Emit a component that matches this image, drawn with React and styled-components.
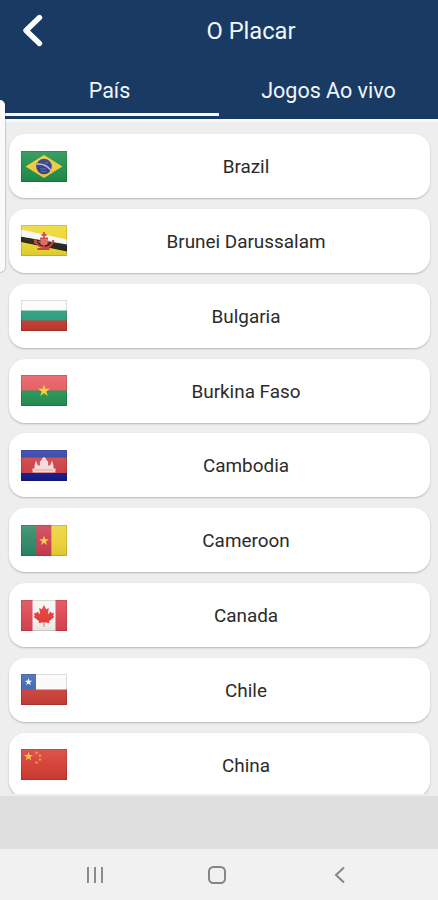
import React from 'react'
import styled, { createGlobalStyle } from 'styled-components'

const GlobalStyle = createGlobalStyle`
  body {
    margin: 0;
    background: #eeeeee;
    font-family: Roboto, "Liberation Sans", sans-serif;
  }

  * {
    box-sizing: border-box;
  }
`

const Screen = styled.div`
  position: relative;
  width: 438px;
  height: 900px;
  overflow: hidden;
  display: flex;
  flex-direction: column;
  background: #eeeeee;
`

const Header = styled.header`
  flex: none;
  height: 119px;
  background: #193b63;
  color: #f1f6fd;
`

const TitleBar = styled.div`
  display: flex;
  align-items: center;
  height: 62px;
`

const BackButton = styled.button`
  display: flex;
  width: 64px;
  padding: 0 0 0 22px;
  border: 0;
  background: none;
`

const Title = styled.h1`
  flex: 1;
  margin: 0;
  font-size: 23.7px;
  font-weight: 400;
  text-align: center;
`

const Tabs = styled.nav`
  display: flex;
  height: 54px;
`

const Tab = styled.div`
  flex: 1;
  padding-top: 15px;
  font-size: 21.5px;
  line-height: 27px;
  text-align: center;
  border-bottom: 3px solid ${props => (props.$active ? '#f8f8ff' : 'transparent')};
`

const List = styled.ul`
  flex: none;
  display: flex;
  flex-direction: column;
  gap: 10.85px;
  height: 675px;
  margin: 0 0 2px;
  padding: 12px 8px 0 9px;
  border-top: 3px solid #fafafa;
  list-style: none;
  overflow: hidden;
`

const Row = styled.li`
  flex: none;
  display: flex;
  align-items: center;
  height: 64px;
  padding: 0 5px 0 12px;
  border-radius: 16px;
  background: #ffffff;
  box-shadow: 0 1px 2px rgba(0, 0, 0, 0.24);
`

const Flag = styled.svg`
  flex: none;
  width: 46px;
  height: 31px;
`

const Country = styled.span`
  flex: 1;
  padding-top: 2px;
  color: #2b2b2b;
  font-size: 18.9px;
  line-height: 24px;
  text-align: center;
`

const Footer = styled.div`
  flex: none;
  height: 53px;
  background: #dfdfdf;
`

const SystemBar = styled.footer`
  display: grid;
  flex: 1;
  grid-template-columns: 123px 126px 12px;
  align-items: center;
  padding: 1px 0 0 85px;
  background: #f1f1f1;
`

const EdgeHandle = styled.div`
  position: absolute;
  top: 100px;
  left: -10px;
  width: 15px;
  height: 172px;
  border-radius: 5px;
  background: #fafafa;
  box-shadow: 0 0 1px 1px rgba(0, 0, 0, 0.16);
`

const STAR = '0,-1 .225,-.309 .951,-.309 .363,.118 .588,.809 0,.382 -.588,.809 -.363,.118 -.951,-.309 -.225,-.309'

const Star = ({ x, y, r, fill }) => (
  <polygon points={STAR} fill={fill} transform={`translate(${x} ${y}) scale(${r})`} />
)

const countries = [
  {
    name: 'Brazil',
    flag: (
      <>
        <rect width="46" height="31" fill="#1f8e4b" />
        <path d="M4.5 15.5 23 4l18.5 11.5L23 27z" fill="#eec93b" />
        <circle cx="23" cy="15.5" r="7.8" fill="#303b82" />
        <path d="M15.8 13.2q8-1 14 6" fill="none" stroke="#b8c2d5" strokeWidth="1.5" />
        <path d="M19 18h6M20 20.5h5M24 12h3" stroke="#7078a8" strokeWidth=".8" />
      </>
    ),
  },
  {
    name: 'Brunei Darussalam',
    flag: (
      <>
        <rect width="46" height="31" fill="#ecd72f" />
        <path d="M0 11.5 46 19v7.5L0 17z" fill="#24221d" />
        <path d="M0 4.5 46 14.5v5L0 11.5z" fill="#f7f7f5" />
        <g fill="none" stroke="#cf4139" strokeWidth="1.8">
          <path d="M23 7v15M20.5 10h5M19 13.5h8M14.5 14q1 8 8.5 8.5t9-7" />
          <path d="M17.5 16q5.5 6 11 0M16.5 24h12M14.5 19l-1-4M31 19l1.5-4" />
        </g>
        <path d="M19 14h8l-1 6h-6z" fill="#d76960" />
      </>
    ),
  },
  {
    name: 'Bulgaria',
    flag: (
      <>
        <rect width="46" height="31" fill="#fbfbfb" />
        <rect y="10.5" width="46" height="10.5" fill="#2c9c7d" />
        <rect y="20.5" width="46" height="10.5" fill="#c63a30" />
      </>
    ),
  },
  {
    name: 'Burkina Faso',
    flag: (
      <>
        <rect width="46" height="16" fill="#e6585d" />
        <rect y="15.5" width="46" height="15.5" fill="#229354" />
        <Star x={23} y={15.8} r={6.4} fill="#f5cd35" />
      </>
    ),
  },
  {
    name: 'Cambodia',
    flag: (
      <>
        <rect width="46" height="31" fill="#2a3ba6" />
        <rect y="7.5" width="46" height="15.5" fill="#cc3f42" />
        <rect y="23" width="46" height="8" fill="#141a8c" />
        <path
          d="M11.5 22.5v-4h2v-3l1.500-5 2 5h1.800v-4l1.500-1 .8-2 1.900-1.500 1.900 1.500.8 2 1.500 1v4h1.800l2-5 1.500 5v3h2v4z"
          fill="#f6dadb"
        />
        <path d="M14 20h18" stroke="#d9888b" strokeWidth=".6" />
      </>
    ),
  },
  {
    name: 'Cameroon',
    flag: (
      <>
        <rect width="16" height="31" fill="#2c8765" />
        <rect x="15.3" width="15.5" height="31" fill="#cc3d50" />
        <rect x="30.5" width="15.5" height="31" fill="#ecd134" />
        <Star x={23} y={15.8} r={5.2} fill="#f3ce45" />
      </>
    ),
  },
  {
    name: 'Canada',
    flag: (
      <>
        <rect width="46" height="31" fill="#f5f5f5" />
        <rect width="11.5" height="31" fill="#dc4450" />
        <rect x="34.5" width="11.5" height="31" fill="#dc4450" />
        <path
          d="M23 5l2.2 4.2 2.6-1.3-.9 6.3 3-2.8.8 1.8 2.5-.4-1.1 3.2 1.2 1-5.4 4.2.5 1.7-5-.7v4.3h-.8v-4.3l-5 .7.5-1.7-5.4-4.2 1.2-1-1.1-3.2 2.5.4.8-1.8 3 2.8-.9-6.3 2.6 1.3z"
          fill="#e53834"
        />
      </>
    ),
  },
  {
    name: 'Chile',
    flag: (
      <>
        <rect width="46" height="31" fill="#fafafa" />
        <rect width="15" height="16" fill="#3b64b2" />
        <rect y="15.5" width="46" height="15.5" fill="#cb3f38" />
        <Star x={7.5} y={8} r={4} fill="#f6f9ff" />
      </>
    ),
  },
  {
    name: 'China',
    flag: (
      <>
        <rect width="46" height="31" fill="#d43b31" />
        <Star x={7.5} y={7.5} r={4.8} fill="#f5bb35" />
        <Star x={15.5} y={3.8} r={2} fill="#ee9e34" />
        <Star x={19} y={6.5} r={2} fill="#ee9e34" />
        <Star x={19} y={10.5} r={2} fill="#ee9e34" />
        <Star x={15.5} y={13.5} r={2} fill="#ee9e34" />
      </>
    ),
  },
]

const CountryRow = ({ name, flag }) => (
  <Row>
    <Flag viewBox="0 0 46 31">
      <defs>
        <linearGradient id="gloss" x1="0" y1="0" x2="0" y2="1">
          <stop offset="0" stopColor="#fff" stopOpacity=".14" />
          <stop offset=".5" stopColor="#fff" stopOpacity=".05" />
          <stop offset="1" stopColor="#000" stopOpacity=".07" />
        </linearGradient>
      </defs>
      {flag}
      <rect width="46" height="31" fill="url(#gloss)" />
      <rect x=".5" y=".5" width="45" height="30" fill="none" stroke="#000" strokeOpacity=".12" />
    </Flag>
    <Country>{name}</Country>
  </Row>
)

const App = () => {
  return (
    <Screen>
      <GlobalStyle />
      <Header>
        <TitleBar>
          <BackButton aria-label="Voltar">
            <svg width="22" height="36" viewBox="0 0 22 36" fill="none">
              <path d="M17.5 4.5 4 17.5l13.5 13" stroke="#fff" strokeWidth="5.4" strokeLinecap="round" strokeLinejoin="round" />
            </svg>
          </BackButton>
          <Title>O Placar</Title>
        </TitleBar>
        <Tabs>
          <Tab $active>País</Tab>
          <Tab>Jogos Ao vivo</Tab>
        </Tabs>
      </Header>
      <List>
        {countries.map(country => (
          <CountryRow key={country.name} {...country} />
        ))}
      </List>
      <Footer />
      <SystemBar>
        <svg width="20" height="18" viewBox="0 0 20 18">
          <path d="M3 1v16M10 1v16M17 1v16" stroke="#8b8b8b" strokeWidth="2" />
        </svg>
        <svg width="18" height="20" viewBox="0 0 18 20">
          <rect x="1" y="2" width="16" height="16" rx="4.5" fill="none" stroke="#858585" strokeWidth="2" />
        </svg>
        <svg width="12" height="18" viewBox="0 0 12 18">
          <path d="M10 1.5 2 9l8 7.5" fill="none" stroke="#858585" strokeWidth="2" />
        </svg>
      </SystemBar>
      <EdgeHandle />
    </Screen>
  )
}

export default App
